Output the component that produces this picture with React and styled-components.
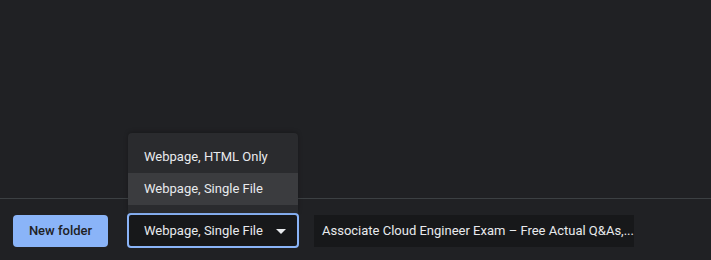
import React from "react";
import styled, { createGlobalStyle } from "styled-components";

const GlobalStyle = createGlobalStyle`
  html, body {
    margin: 0;
    padding: 0;
    background: #202124;
  }
  body {
    font-family: Roboto, "Liberation Sans", sans-serif;
    color: #e8eaed;
  }
`;

const options = ["Webpage, HTML Only", "Webpage, Single File"];

function App() {
  const selected = 1;
  return (
    <>
      <GlobalStyle />
      <Page>
        <Content />
        <Footer>
          <PrimaryButton>New folder</PrimaryButton>
          <SelectWrap>
            <Menu>
              {options.map((o, i) => (
                <MenuItem key={o} $active={i === selected}>
                  {o}
                </MenuItem>
              ))}
            </Menu>
            <Select>
              <span>{options[selected]}</span>
              <Caret viewBox="0 0 10 5">
                <path d="M0 0 L10 0 L5 5 Z" fill="#e8eaed" />
              </Caret>
            </Select>
          </SelectWrap>
          <FileName>Associate Cloud Engineer Exam – Free Actual Q&amp;As,...</FileName>
        </Footer>
      </Page>
    </>
  );
}

const Page = styled.div`
  height: 260px;
  display: flex;
  flex-direction: column;
`;

const Content = styled.div`
  flex: 1;
  border-bottom: 1px solid #3c4043;
`;

const Footer = styled.div`
  height: 61px;
  box-sizing: border-box;
  padding: 14px 13px 12px;
  display: flex;
  align-items: center;
`;

const PrimaryButton = styled.button`
  width: 95px;
  height: 32px;
  border: none;
  border-radius: 4px;
  background: #8ab4f8;
  color: #202124;
  font-family: Roboto, "Liberation Sans", sans-serif;
  font-size: 13px;
  font-weight: 500;
  padding: 0;
  margin-right: 19px;
`;

const SelectWrap = styled.div`
  position: relative;
  margin-right: 15px;
`;

const Select = styled.div`
  width: 172px;
  height: 35px;
  box-sizing: border-box;
  border: 2px solid #8ab4f8;
  border-radius: 4px;
  background: #17181a;
  display: flex;
  align-items: center;
  justify-content: space-between;
  padding: 0 11px 0 15px;
  font-size: 13px;
  color: #e8eaed;
`;

const Caret = styled.svg`
  width: 10px;
  height: 5px;
  margin-top: 1px;
`;

const Menu = styled.div`
  position: absolute;
  left: 1px;
  bottom: 100%;
  width: 170px;
  padding: 8px 0;
  background: #2a2b2e;
  border-radius: 4px 4px 0 0;
  box-shadow: 0 -1px 4px rgba(0, 0, 0, 0.25);
`;

const MenuItem = styled.div`
  height: 32px;
  display: flex;
  align-items: center;
  padding-left: 16px;
  padding-bottom: 1px;
  box-sizing: border-box;
  font-size: 13px;
  color: #e8eaed;
  background: ${(p) => (p.$active ? "#3b3c3f" : "transparent")};
`;

const FileName = styled.div`
  width: 320px;
  height: 32px;
  box-sizing: border-box;
  background: #17181a;
  padding: 0 8px;
  font-size: 13px;
  line-height: 32px;
  color: #e8eaed;
  white-space: nowrap;
`;

export default App;
